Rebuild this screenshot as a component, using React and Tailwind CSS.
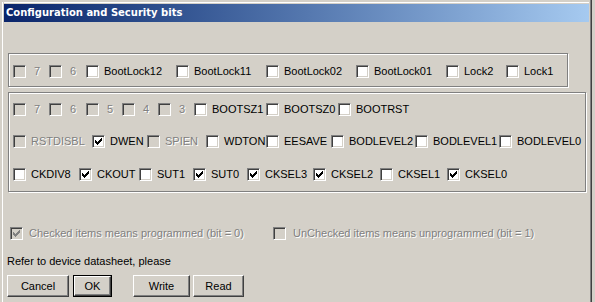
import React from "react";

const font = "font-['Liberation_Sans',Arial,sans-serif] text-[11px] leading-[13px]";

const CHECK = [
  [0, 2], [1, 3], [2, 4], [3, 3], [4, 2], [5, 1], [6, 0],
];

function Box({ checked, disabled }) {
  return (
    <span
      className={`block w-[13px] h-[13px] shrink-0 border border-[#808080] border-b-white border-r-white shadow-[inset_1px_1px_0_#404040,inset_-1px_-1px_0_#d4d0c8] ${
        disabled ? "bg-[#d4d0c8]" : "bg-white"
      }`}
    >
      {checked && (
        <svg width="11" height="11" viewBox="0 0 11 11" className="block" shapeRendering="crispEdges">
          {CHECK.map(([c, r]) => (
            <rect key={c} x={2 + c} y={2 + r} width="1" height="3" fill={disabled ? "#808080" : "#000"} />
          ))}
        </svg>
      )}
    </span>
  );
}

function Label({ text, disabled, className = "" }) {
  return (
    <span
      className={`whitespace-nowrap ${className} ${
        disabled ? "text-[#808080] [text-shadow:1px_1px_0_#ffffff]" : "text-black"
      }`}
    >
      {text}
    </span>
  );
}

function Item({ w, t, c, d }) {
  const digit = t.length === 1;
  return (
    <div className="flex items-center h-[13px] overflow-hidden shrink-0" style={{ width: w }}>
      <Box checked={c} disabled={d} />
      <Label text={t} disabled={d} className={digit ? "ml-[8px]" : "ml-[5px]"} />
    </div>
  );
}

const row1 = [
  { w: 36, t: "7", d: true },
  { w: 37, t: "6", d: true },
  { w: 90, t: "BootLock12" },
  { w: 90, t: "BootLock11" },
  { w: 90, t: "BootLock02" },
  { w: 90, t: "BootLock01" },
  { w: 60, t: "Lock2" },
  { w: 50, t: "Lock1" },
];

const row2 = [
  { w: 36, t: "7", d: true },
  { w: 37, t: "6", d: true },
  { w: 36, t: "5", d: true },
  { w: 36, t: "4", d: true },
  { w: 36, t: "3", d: true },
  { w: 72, t: "BOOTSZ1" },
  { w: 72, t: "BOOTSZ0" },
  { w: 80, t: "BOOTRST" },
];

const row3 = [
  { w: 79, t: "RSTDISBL", d: true },
  { w: 55, t: "DWEN", c: true },
  { w: 59, t: "SPIEN", d: true },
  { w: 60, t: "WDTON" },
  { w: 65, t: "EESAVE" },
  { w: 84, t: "BODLEVEL2" },
  { w: 84, t: "BODLEVEL1" },
  { w: 86, t: "BODLEVEL0" },
];

const row4 = [
  { w: 66, t: "CKDIV8" },
  { w: 60, t: "CKOUT", c: true },
  { w: 54, t: "SUT1" },
  { w: 54, t: "SUT0", c: true },
  { w: 66, t: "CKSEL3", c: true },
  { w: 67, t: "CKSEL2", c: true },
  { w: 67, t: "CKSEL1" },
  { w: 70, t: "CKSEL0", c: true },
];

function Row({ items, className = "" }) {
  return (
    <div className={`flex ${className}`}>
      {items.map((it, i) => (
        <Item key={i} {...it} />
      ))}
    </div>
  );
}

function Button({ children, w, isDefault }) {
  const face = (
    <div className="h-full w-full flex items-center justify-center bg-[#d4d0c8] border border-white border-b-[#404040] border-r-[#404040] shadow-[inset_-1px_-1px_0_#808080]">
      {children}
    </div>
  );
  return (
    <div className="h-[22px] shrink-0" style={{ width: w }}>
      {isDefault ? <div className="h-full w-full border border-black">{face}</div> : face}
    </div>
  );
}

export default function App() {
  return (
    <div className={`w-[595px] h-[302px] bg-[#d4d0c8] overflow-hidden flex ${font}`}>
      {/* left frame */}
      <div className="w-[4px] shrink-0 flex">
        <div className="w-[2px] bg-[#d4d0c8]" />
        <div className="w-[1px] mt-[2px] bg-white" />
        <div className="w-[1px] mt-[3px] bg-[#d4d0c8]" />
      </div>

      {/* window */}
      <div className="w-[585px] shrink-0 flex flex-col">
        <div className="h-[2px]" />
        <div className="h-[1px] bg-white" />
        <div className="h-[1px]" />

        {/* title bar */}
        <div className="h-[18px] flex items-center pl-[2px] bg-linear-to-r from-[#0a246a] to-[#a6caf0]">
          <span className="text-white font-bold font-['DejaVu_Sans',sans-serif] text-[10px] leading-[18px] whitespace-nowrap">
            Configuration and Security bits
          </span>
        </div>

        {/* lock bits */}
        <div className="ml-[4px] mt-[31px] w-[560px] h-[34px] border border-[#808080] shadow-[inset_1px_1px_0_#fff,1px_1px_0_#fff] pl-[4px] pt-[11px]">
          <Row items={row1} />
        </div>

        {/* fuse bits */}
        <div className="ml-[4px] mt-[5px] w-[578px] h-[100px] border border-[#808080] shadow-[inset_1px_1px_0_#fff,1px_1px_0_#fff] pl-[4px] pt-[10px] flex flex-col">
          <Row items={row2} />
          <Row items={row3} className="mt-[19px]" />
          <Row items={row4} className="mt-[20px]" />
        </div>

        {/* legend */}
        <div className="flex mt-[35px] pl-[6px]">
          <div className="w-[263px] flex items-center h-[13px]">
            <Box checked disabled />
            <Label text="Checked items means programmed (bit = 0)" disabled className="ml-[6px]" />
          </div>
          <div className="flex items-center h-[13px]">
            <Box disabled />
            <Label text="UnChecked items means unprogrammed (bit = 1)" disabled className="ml-[7px]" />
          </div>
        </div>

        <div className="mt-[15px] pl-[3px] text-black whitespace-nowrap">Refer to device datasheet, please</div>

        {/* buttons */}
        <div className="flex mt-[7px] pl-[3px] text-black">
          <Button w={62}>Cancel</Button>
          <div className="w-[4px] shrink-0" />
          <Button w={39} isDefault>OK</Button>
          <div className="w-[21px] shrink-0" />
          <Button w={57}>Write</Button>
          <div className="w-[3px] shrink-0" />
          <Button w={51}>Read</Button>
        </div>
      </div>

      {/* right frame */}
      <div className="flex shrink-0">
        <div className="w-[1px] bg-[#d4d0c8]" />
        <div className="w-[1px] bg-[#808080]" />
        <div className="w-[1px] bg-[#404040]" />
        <div className="w-[3px] bg-[#d4d0c8]" />
      </div>
    </div>
  );
}
